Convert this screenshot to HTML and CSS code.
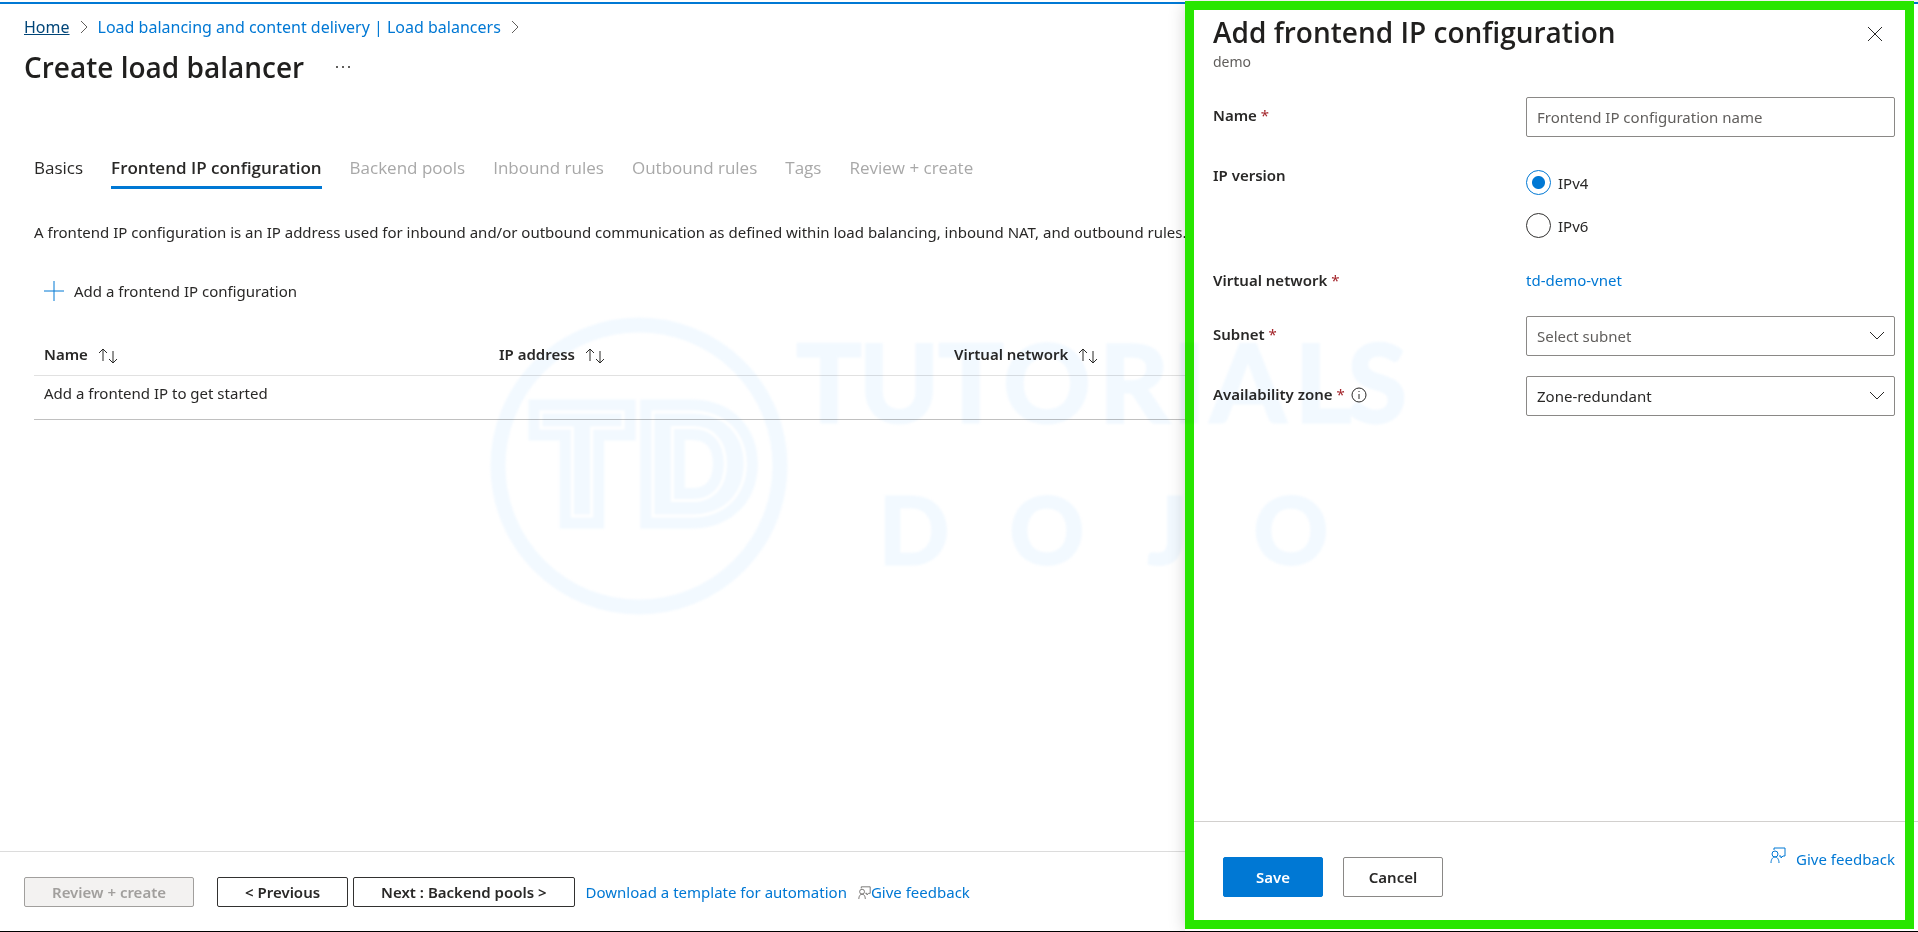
FILE: index.html
```
<!DOCTYPE html>
<html lang="en">
  <head>
    <meta charset="utf-8" />
    <meta name="viewport" content="width=device-width,initial-scale=1" />
    <title>Create load balancer</title>
    <link rel="stylesheet" href="styles.css">
  </head>
  <body>
    <main class="blade">
      <nav class="breadcrumb" aria-label="Breadcrumb">
        <a class="current" href="#">Home</a>
        <svg class="crumb-arrow" viewBox="0 0 8 14"><path d="M1 1l6 6-6 6" /></svg>
        <a href="#">Load balancing and content delivery | Load balancers</a>
        <svg class="crumb-arrow" viewBox="0 0 8 14"><path d="M1 1l6 6-6 6" /></svg>
      </nav>
      <header class="blade-title">
        <h1>Create load balancer</h1>
        <button class="more" type="button" aria-label="More">
          <svg viewBox="0 0 14 2"><path d="M0 0h2v2H0zM6 0h2v2H6zM12 0h2v2h-2z" /></svg>
        </button>
      </header>

      <div class="content">
        <div class="tabs" role="tablist">
          <button type="button" role="tab">Basics</button>
          <button type="button" role="tab" class="active" aria-selected="true">Frontend IP configuration</button>
          <button type="button" role="tab" disabled>Backend pools</button>
          <button type="button" role="tab" disabled>Inbound rules</button>
          <button type="button" role="tab" disabled>Outbound rules</button>
          <button type="button" role="tab" disabled>Tags</button>
          <button type="button" role="tab" disabled>Review + create</button>
        </div>

        <p class="description">A frontend IP configuration is an IP address used for inbound and/or outbound communication as defined within load balancing, inbound NAT, and outbound rules.</p>

        <button class="command" type="button">
          <svg viewBox="0 0 20 20"><path d="M10 0v20M0 10h20" /></svg>
          Add a frontend IP configuration
        </button>

        <table>
          <colgroup>
            <col /><col /><col /><col />
          </colgroup>
          <thead>
            <tr>
              <th>Name <svg class="sort" viewBox="0 0 20 16"><path d="M5 13V1M1 5l4-4 4 4M15 3v12M11 11l4 4 4-4" /></svg></th>
              <th>IP address <svg class="sort" viewBox="0 0 20 16"><path d="M5 13V1M1 5l4-4 4 4M15 3v12M11 11l4 4 4-4" /></svg></th>
              <th colspan="2">Virtual network <svg class="sort" viewBox="0 0 20 16"><path d="M5 13V1M1 5l4-4 4 4M15 3v12M11 11l4 4 4-4" /></svg></th>
            </tr>
          </thead>
          <tbody>
            <tr>
              <td colspan="4">Add a frontend IP to get started</td>
            </tr>
          </tbody>
        </table>
      </div>

      <footer class="wizard-bar">
        <button class="wizard-button first" type="button" disabled>Review + create</button>
        <button class="wizard-button" type="button">&lt; Previous</button>
        <button class="wizard-button" type="button">Next : Backend pools &gt;</button>
        <a class="template" href="#">Download a template for automation</a>
        <svg class="feedback-icon small" viewBox="0 0 16 16"><path d="M4 3V1h11v8h-2l-2 2V9H9" /><circle cx="5" cy="7" r="3" /><path d="M1 16c0-4 2-6 4-6s4 2 4 6" /></svg>
        <a href="#">Give feedback</a>
      </footer>
    </main>

    <aside class="panel">
      <header class="panel-header">
        <div>
          <h2>Add frontend IP configuration</h2>
          <p>demo</p>
        </div>
        <button class="close" type="button" aria-label="Close">
          <svg viewBox="0 0 16 16"><path d="M1 1l14 14M15 1L1 15" /></svg>
        </button>
      </header>

      <form class="form" autocomplete="off">
        <label for="name">Name <span class="required">*</span></label>
        <input id="name" class="box" type="text" placeholder="Frontend IP configuration name" />

        <span class="label" id="version">IP version</span>
        <div class="radios" role="radiogroup" aria-labelledby="version">
          <label><input type="radio" name="version" checked />IPv4</label>
          <label><input type="radio" name="version" />IPv6</label>
        </div>

        <span class="label">Virtual network <span class="required">*</span></span>
        <a class="value" href="#">td-demo-vnet</a>

        <label for="subnet">Subnet <span class="required">*</span></label>
        <div class="dropdown">
          <select id="subnet" class="box empty"><option>Select subnet</option></select>
          <svg viewBox="0 0 16 10"><path d="M1 1l7 7 7-7" /></svg>
        </div>

        <label for="zone">Availability zone <span class="required">*</span>
          <svg class="info" viewBox="0 0 16 16"><circle cx="8" cy="8" r="7" /><path d="M8 7v5M8 4v1" /></svg>
        </label>
        <div class="dropdown">
          <select id="zone" class="box"><option>Zone-redundant</option></select>
          <svg viewBox="0 0 16 10"><path d="M1 1l7 7 7-7" /></svg>
        </div>
      </form>

      <footer class="panel-footer">
        <button class="save" type="button">Save</button>
        <button class="cancel" type="button">Cancel</button>
        <a class="panel-feedback" href="#">
          <svg class="feedback-icon" viewBox="0 0 16 16"><path d="M4 3V1h11v8h-2l-2 2V9H9" /><circle cx="5" cy="7" r="3" /><path d="M1 16c0-4 2-6 4-6s4 2 4 6" /></svg>
          Give feedback
        </a>
      </footer>
    </aside>

    <svg class="watermark" viewBox="488 316 942 300" aria-hidden="true">
      <circle cx="639" cy="466" r="141" />
      <g class="mark">
        <text class="outer" x="582" y="516">T</text>
        <text class="outer" x="696" y="516">D</text>
        <text class="inner" x="582" y="516">T</text>
        <text class="inner" x="696" y="516">D</text>
      </g>
      <text class="word" y="422"><tspan x="829">T</tspan><tspan x="899">U</tspan><tspan x="971">T</tspan><tspan x="1047">O</tspan><tspan x="1134">R</tspan><tspan x="1189">I</tspan><tspan x="1248">A</tspan><tspan x="1323">L</tspan><tspan x="1377">S</tspan></text>
      <text class="word small" y="564"><tspan x="914">D</tspan><tspan x="1047">O</tspan><tspan x="1168">J</tspan><tspan x="1291">O</tspan></text>
    </svg>
  </body>
</html>
```
FILE: styles.css
```
*,
:after,
:before {
  box-sizing: border-box;
}

body {
  position: relative;
  min-height: 100vh;
  margin: 0;
  overflow: hidden;
  background-color: #fff;
  color: #292827;
  font: 15px/24px "Noto Sans", "Open Sans", sans-serif;
}

h1,
h2,
p {
  margin: 0;
}

h1,
h2 {
  color: #201f1e;
  font-family: "Open Sans", sans-serif;
  font-size: 28px;
  font-weight: 600;
  line-height: 36px;
}

a {
  color: #0078d4;
  text-decoration: none;
}

button {
  padding: 0;
  border: 0;
  background: none;
  color: inherit;
  font: inherit;
  white-space: nowrap;
}

svg {
  flex: none;
  fill: none;
  stroke: currentColor;
}

.blade {
  display: flex;
  flex-direction: column;
  min-height: 100vh;
  padding-top: 2px;
  border-bottom: 1px solid #000;
}

.blade:before {
  content: "";
  height: 2px;
  margin-bottom: 11px;
  background-color: #0078d4;
}

.breadcrumb {
  display: flex;
  align-items: center;
  gap: 10px;
  padding-left: 24px;
  font-size: 16px;
}

.breadcrumb .current {
  color: #004578;
  text-decoration: underline;
}

.crumb-arrow {
  width: 8px;
  height: 14px;
  color: #605e5c;
}

.blade-title {
  display: flex;
  align-items: center;
  gap: 32px;
  margin-top: 10px;
  padding-left: 24px;
}

.more {
  display: flex;
}

.more svg {
  width: 14px;
  height: 2px;
  fill: #605e5c;
  stroke: none;
}

.content {
  padding: 71px 64px 0 34px;
}

.tabs {
  display: flex;
  gap: 28px;
  font-family: "Open Sans", sans-serif;
  font-size: 17px;
}

.tabs button {
  padding-bottom: 6px;
  border-bottom: 3px solid transparent;
}

.tabs .active {
  border-color: #0078d4;
  font-weight: 600;
}

.tabs button:disabled {
  color: #a8a8a8;
}

.description {
  margin-top: 31px;
  white-space: nowrap;
}

.command {
  display: flex;
  align-items: center;
  gap: 10px;
  margin: 35px 0 30px 10px;
}

.command svg {
  width: 20px;
  height: 20px;
  color: #0078d4;
}

table {
  width: 100%;
  table-layout: fixed;
  border-collapse: separate;
  border-spacing: 0;
}

th {
  padding: 9px 10px;
  border-bottom: 1px solid #e1e1e1;
  font-weight: 600;
  text-align: left;
}

td {
  padding: 5px 10px 14px;
  border-bottom: 1px solid #c0c0c0;
}

.sort {
  width: 20px;
  height: 16px;
  margin-left: 6px;
  vertical-align: middle;
}

.wizard-bar {
  display: flex;
  align-items: center;
  margin-top: auto;
  padding: 25px 24px 24px;
  border-top: 1px solid #dcdcdc;
}

.wizard-button {
  height: 30px;
  margin-right: 5px;
  padding: 0 27px;
  border: 1px solid #323130;
  border-radius: 2px;
  font-weight: 600;
  line-height: 28px;
}

.wizard-button.first {
  margin-right: 23px;
}

.wizard-button:disabled {
  border-color: #a19f9d;
  background-color: #f3f2f1;
  color: #a19f9d;
}

.template {
  margin: 0 11px 0 6px;
}

.feedback-icon {
  width: 16px;
  height: 16px;
}

.feedback-icon.small {
  width: 13px;
  height: 13px;
  color: #605e5c;
}

.panel {
  position: absolute;
  top: 4px;
  right: 0;
  bottom: 1px;
  display: flex;
  flex-direction: column;
  width: 733px;
  padding-top: 10px;
  background-color: #fff;
  box-shadow: 0 0 16px rgba(0, 0, 0, 0.18);
}

/* highlight frame around the panel */
.panel:after {
  content: "";
  position: absolute;
  inset: -3px 4px 2px 0;
  border: 9px solid #28e600;
  pointer-events: none;
}

.panel-header {
  display: flex;
  justify-content: space-between;
  padding: 0 35px 0 28px;
}

.panel-header p {
  color: #605e5c;
  font-size: 14px;
}

.close {
  display: flex;
  align-items: center;
  height: 40px;
}

.close svg {
  width: 16px;
  height: 16px;
}

.form {
  display: grid;
  grid-template-columns: 313px 1fr;
  row-gap: 20px;
  padding: 23px 23px 0 28px;
}

.form > label,
.label {
  padding-top: 6px;
  font-weight: 600;
}

.required {
  color: #a4262c;
  font-weight: 400;
}

.box {
  width: 100%;
  height: 40px;
  padding: 0 10px;
  border: 1px solid #8a8886;
  border-radius: 2px;
  background-color: #fff;
  color: #292827;
  font: inherit;
  appearance: none;
}

.box.empty,
.box::placeholder {
  color: #605e5c;
  opacity: 1;
}

.radios {
  display: flex;
  flex-direction: column;
  gap: 18px;
  padding: 13px 0 4px;
}

.radios label {
  display: flex;
  align-items: center;
  gap: 7px;
  height: 25px;
}

.radios input {
  width: 25px;
  height: 25px;
  margin: 0;
  border: 1px solid #323130;
  border-radius: 50%;
  appearance: none;
}

.radios input:checked {
  border-color: #0078d4;
  background: radial-gradient(circle, #0078d4 6px, #fff 7px);
}

.value {
  padding: 6px 0 4px;
}

.dropdown {
  position: relative;
}

.dropdown svg {
  position: absolute;
  top: 15px;
  right: 10px;
  width: 16px;
  height: 10px;
  pointer-events: none;
}

.info {
  width: 16px;
  height: 16px;
  margin-left: 2px;
  vertical-align: -3px;
}

.panel-footer {
  display: flex;
  gap: 20px;
  height: 110px;
  margin-top: auto;
  padding: 35px 23px 0 38px;
  border-top: 1px solid #d2d0ce;
}

.save,
.cancel {
  width: 100px;
  height: 40px;
  border: 1px solid #8a8886;
  border-radius: 2px;
  font-weight: 600;
}

.save {
  border-color: #0078d4;
  background-color: #0078d4;
  color: #fff;
}

.panel-feedback {
  display: flex;
  gap: 10px;
  height: 24px;
  margin: -10px 0 0 auto;
}

.watermark {
  position: absolute;
  inset: 0;
  width: 942px;
  height: 300px;
  margin: auto;
  color: #f2f9ff;
  font-family: Lato, sans-serif;
  font-weight: 700;
  text-anchor: middle;
  filter: blur(1px);
  mix-blend-mode: multiply;
  pointer-events: none;
}

.watermark circle {
  stroke-width: 15px;
}

.watermark text {
  fill: currentColor;
}

.mark {
  font-size: 144px;
}

.outer {
  stroke-width: 25px;
}

.inner {
  stroke: #fff;
  stroke-width: 3px;
}

.word {
  font-size: 108px;
  stroke-width: 3px;
}

.word.small {
  font-size: 92px;
}
```
